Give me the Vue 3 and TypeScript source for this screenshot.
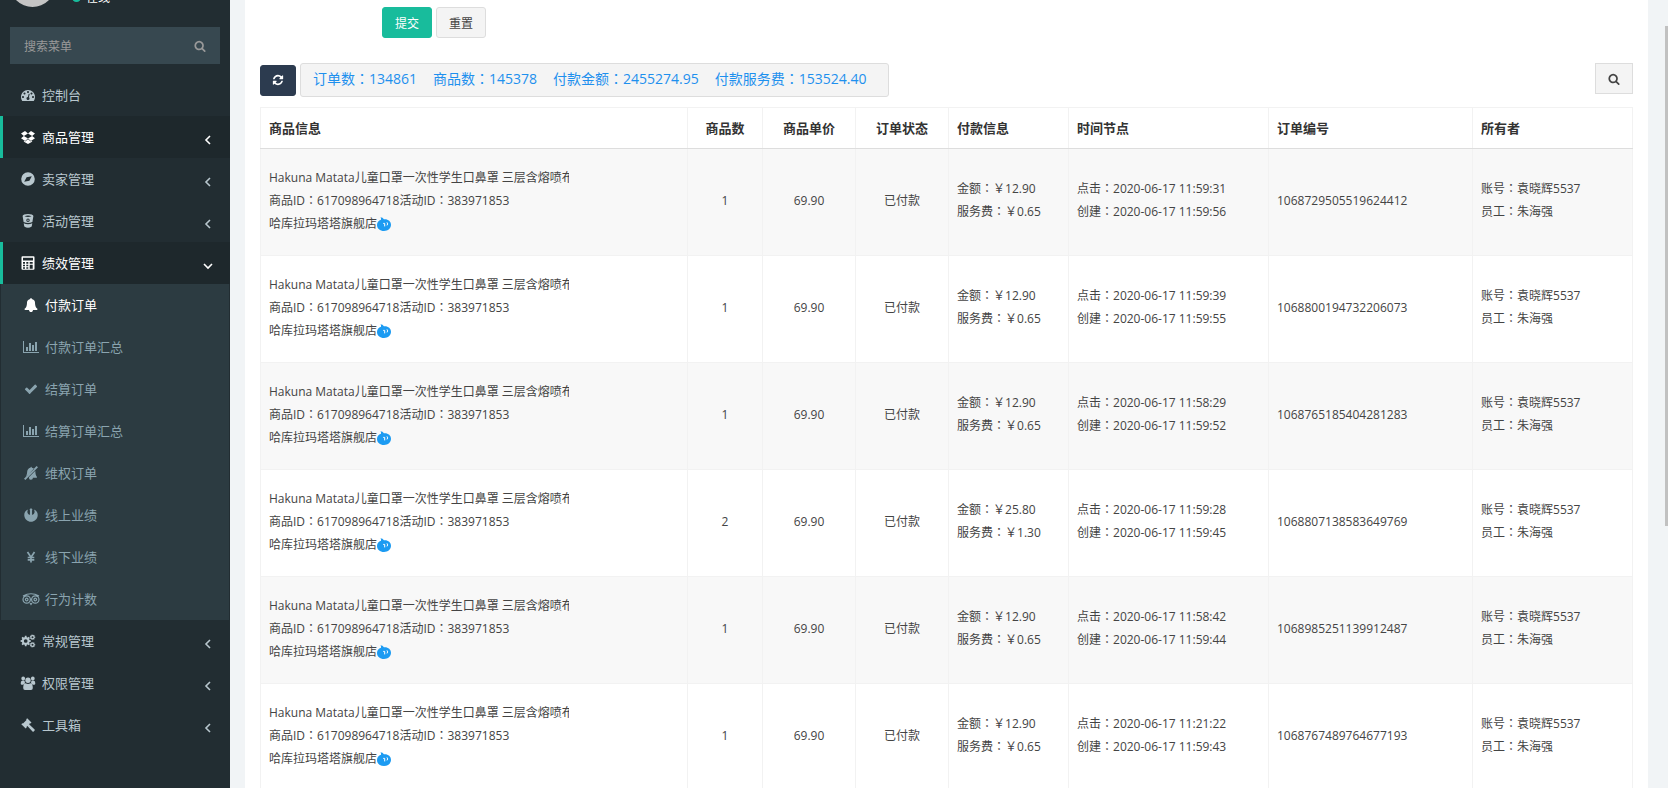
<script setup lang="ts">
import { ref } from 'vue'

interface Icon {
  box: string
  d: string
  line?: number
}

interface MenuItem {
  label: string
  icon: string
  active?: boolean
  arrow?: 'left' | 'down'
  children?: MenuItem[]
}

interface Order {
  count: number
  amount: string
  fee: string
  clicked: string
  created: string
  no: string
}

function circle(cx: number, cy: number, r: number): string {
  return `M${cx - r} ${cy}a${r} ${r} 0 1 0 ${2 * r} 0a${r} ${r} 0 1 0 ${-2 * r} 0z`
}

function gear(cx: number, cy: number, r: number, teeth: number): string {
  const points: string[] = []
  for (let i = 0; i < teeth; i++) {
    const step = (Math.PI * 2) / teeth
    const spots: [number, number][] = [[-0.32, 0.76], [-0.2, 1], [0.2, 1], [0.32, 0.76]]
    for (const [offset, scale] of spots) {
      const a = (i + offset) * step
      points.push(`${(cx + Math.cos(a) * r * scale).toFixed(2)} ${(cy + Math.sin(a) * r * scale).toFixed(2)}`)
    }
  }
  return `M${points.join('L')}z${circle(cx, cy, r * 0.36)}`
}

const icons: Record<string, Icon> = {
  dashboard: {
    box: '0 0 1792 1792',
    d: 'M384 1152q0-53-37.5-90.5T256 1024t-90.5 37.5T128 1152t37.5 90.5T256 1280t90.5-37.5T384 1152zm192-448q0-53-37.5-90.5T448 576t-90.5 37.5T320 704t37.5 90.5T448 832t90.5-37.5T576 704zm428 481l101-382q6-26-7.5-48.5T1059 725t-48 6.5-30 39.5l-101 382q-60 5-107 43.5t-63 98.5q-20 77 20 146t117 89 146-20 89-117q16-60-6-117t-72-91zm660-33q0-53-37.5-90.5T1536 1024t-90.5 37.5-37.5 90.5 37.5 90.5 90.5 37.5 90.5-37.5 37.5-90.5zm-640-640q0-53-37.5-90.5T896 384t-90.5 37.5T768 512t37.5 90.5T896 640t90.5-37.5T1024 512zm448 192q0-53-37.5-90.5T1344 576t-90.5 37.5T1216 704t37.5 90.5T1344 832t90.5-37.5T1472 704zm320 448q0 261-141 483-19 29-54 29H195q-35 0-54-29Q0 1414 0 1152q0-182 71-348t191-286 286-191 348-71 348 71 286 191 191 286 71 348z'
  },
  search: {
    box: '0 0 1792 1792',
    d: 'M1216 832q0-185-131.5-316.5T768 384 451.5 515.5 320 832t131.5 316.5T768 1280t316.5-131.5T1216 832zm512 832q0 52-38 90t-90 38q-54 0-90-38l-343-342q-179 124-399 124-143 0-273.5-55.5t-225-150-150-225T64 832t55.5-273.5 150-225 225-150T768 128t273.5 55.5 225 150 150 225T1472 832q0 220-124 399l343 343q37 37 37 90z'
  },
  refresh: {
    box: '0 0 1792 1792',
    d: 'M1639 1056q0 5-1 7-64 268-268 434.5T892 1664q-146 0-282.5-55T366 1452l-129 129q-19 19-45 19t-45-19-19-45v-448q0-26 19-45t45-19h448q26 0 45 19t19 45-19 45l-137 137q71 66 161 102t187 36q134 0 250-65t186-179q11-17 53-117 8-23 30-23h192q13 0 22.5 9.5t9.5 22.5zm25-800v448q0 26-19 45t-45 19h-448q-26 0-45-19t-19-45 19-45l138-138Q1097 384 896 384q-134 0-250 65T460 628q-11 17-53 117-8 23-30 23H178q-13 0-22.5-9.5T146 736v-7q65-268 270-434.5T896 128q146 0 284 55.5T1425 340l130-129q19-19 45-19t45 19 19 45z'
  },
  bell: {
    box: '0 0 1792 1792',
    d: 'M1728 1408q0 52-38 90t-90 38h-448q0 106-75 181t-181 75-181-75-75-181H192q-52 0-90-38t-38-90q50-42 91-88t85-119.5 74.5-158.5 50-206T384 576q0-152 117-282.5T808 135q-8-19-8-39 0-40 28-68t68-28 68 28 28 68q0 20-8 39 190 28 307 158.5T1408 576q0 139 19.5 260t50 206 74.5 158.5 85 119.5 91 88z'
  },
  chart: {
    box: '0 0 2048 1792',
    d: 'M640 896v512H384V896h256zm384-512v1024H768V384h256zm1024 1152v128H0V128h128v1408h1920zm-640-896v768h-256V640h256zm384-384v1152h-256V256h256z'
  },
  check: {
    box: '0 0 1792 1792',
    d: 'M1671 566q0 40-28 68l-724 724-136 136q-28 28-68 28t-68-28l-136-136-362-362q-28-28-28-68t28-68l136-136q28-28 68-28t68 28l294 295 656-657q28-28 68-28t68 28l136 136q28 28 28 68z'
  },
  boxes: {
    box: '0 0 14 14',
    d: 'M4 1L7 3.4 2.9 5.9 0 3.6zM10 1l4 2.6-2.9 2.3L7 3.4zM0 8.2l2.9-2.3L7 8.4l-2.9 2.5zM14 8.2l-2.9-2.3L7 8.4l2.9 2.5zM2.9 10.7l1.2.8L7 9.2l2.9 2.3 1.2-.8v1L7 14l-4.1-2.3z'
  },
  compass: {
    box: '0 0 14 14',
    d: circle(7, 7, 6.8) + 'M3.2 9.8L5.6 5.3 10.8 4.2 8.4 8.7z'
  },
  bucket: {
    box: '0 0 14 14',
    d: 'M1.6 2C1.6.8 4 0 7 0s5.4.8 5.4 2l-1 6q-4.4 2.2-8.800 0zM3.4 2.2q3.600 1.500 7.200 0q-3.600-1.500-7.200 0z' + circle(7, 6.2, 1.7) + circle(7, 6.2, 0.8) + 'M2.7 9.300q4.300 2.100 8.600 0l-.6 3.200Q7 15.200 3.300 12.500z'
  },
  calculator: {
    box: '0 0 14 14',
    d: 'M1.5.2h11q1 0 1 1v11.6q0 1-1 1h-11q-1 0-1-1V1.2q0-1 1-1zM2 1.7v2.800h10V1.7zM2 6v1.700h2V6zM5.3 6v1.700h2V6zM8.7 6v1.700h3V6zM2 8.8v1.400h2V8.8zM5.3 8.8v1.400h2V8.8zM2 11.3v1.400h2v-1.400zM5.3 11.3v1.400h2v-1.400zM8.7 8.8v3.900h3V8.8z'
  },
  mute: {
    box: '0 0 14 14',
    d: 'M12.6 0L14 1.2 1.4 14 0 12.8zM1.6 10.7C3 9.2 3 7 3.3 4.8 3.7 3 5 2 6.5 1.7Q6.6.8 7.2.8t.6.9Q9.5 2 10.3 3zM11.3 4.7C11.4 7.8 11.8 9.4 13 10.9q0 .9-.9.9H9Q8.8 13.7 7 13.7q-1.7 0-2-1.5l-.1-.9z'
  },
  rebel: {
    box: '0 0 14 14',
    d: 'M7 0l1.9 2.2-.9-.1.1 4.700C10 6.300 11.600 4.300 9.900 1.400 12.800 2.600 14 5 13.7 7.700 13.200 11.300 10.400 13.700 7 13.700S.8 11.300.3 7.700C0 5 1.200 2.600 4.100 1.400 2.400 4.300 4 6.300 5.900 6.800L6 2.100l-.9.1z'
  },
  yen: {
    box: '0 0 14 14',
    d: 'M3.5 2L7 7.3 10.5 2M7 7v5.5M3.7 7.5h6.6M3.7 9.8h6.6',
    line: 1.7
  },
  owl: {
    box: '0 0 18 14',
    d: 'M1 4Q9-.5 17 4M8 11l1 1.5 1-1.5' + circle(4.7, 7.5, 3.7) + circle(13.3, 7.5, 3.7) + circle(4.7, 7.5, 1.3) + circle(13.3, 7.5, 1.3),
    line: 1.2
  },
  gears: {
    box: '0 0 15 14',
    d: gear(5.2, 7, 5.2, 8) + gear(12, 3.2, 2.8, 7) + gear(12, 10.8, 2.8, 7)
  },
  group: {
    box: '0 0 15 14',
    d: circle(2.7, 2.5, 1.9) + circle(12.3, 2.5, 1.9) + circle(7.5, 4.2, 2.7) + 'M.2 7.5Q.2 4.8 1.5 4.8h2.6q0 1.8 1 2.9-2 0-2.5 1H1.4Q.2 8.7.2 7.5zM14.8 7.5q0-2.7-1.3-2.7h-2.6q0 1.8-1 2.9 2 0 2.5 1h1.2q1.2 0 1.2-1.2zM5 7.3q2.5 1.5 5 0 2.3 0 2.3 4.7 0 1.9-1.8 1.9h-6Q2.7 13.9 2.7 12 2.7 7.3 5 7.3z'
  },
  gavel: {
    box: '0 0 14 14',
    d: 'M6.2.3L10.5 4.6 9.5 5.6 8.9 5.3 8.1 6.2l5.5 5.2q.5.6 0 1.2l-.9.9q-.6.5-1.2 0L6.4 8 5.4 8.9l.3.6-1 1L.3 6.2l1-1 .7.3L5.5 2 5.2 1.3z'
  },
  left: { box: '0 0 14 14', d: 'M9 3L5 7l4 4', line: 1.6 },
  down: { box: '0 0 14 14', d: 'M3 5l4 4 4-4', line: 1.6 }
}

const menu: MenuItem[] = [
  { label: '控制台', icon: 'dashboard' },
  { label: '商品管理', icon: 'boxes', arrow: 'left', active: true },
  { label: '卖家管理', icon: 'compass', arrow: 'left' },
  { label: '活动管理', icon: 'bucket', arrow: 'left' },
  {
    label: '绩效管理',
    icon: 'calculator',
    arrow: 'down',
    active: true,
    children: [
      { label: '付款订单', icon: 'bell', active: true },
      { label: '付款订单汇总', icon: 'chart' },
      { label: '结算订单', icon: 'check' },
      { label: '结算订单汇总', icon: 'chart' },
      { label: '维权订单', icon: 'mute' },
      { label: '线上业绩', icon: 'rebel' },
      { label: '线下业绩', icon: 'yen' },
      { label: '行为计数', icon: 'owl' }
    ]
  },
  { label: '常规管理', icon: 'gears', arrow: 'left' },
  { label: '权限管理', icon: 'group', arrow: 'left' },
  { label: '工具箱', icon: 'gavel', arrow: 'left' }
]

const totals = [
  { label: '订单数', value: '134861' },
  { label: '商品数', value: '145378' },
  { label: '付款金额', value: '2455274.95' },
  { label: '付款服务费', value: '153524.40' }
]

const orders: Order[] = [
  { count: 1, amount: '12.90', fee: '0.65', clicked: '11:59:31', created: '11:59:56', no: '1068729505519624412' },
  { count: 1, amount: '12.90', fee: '0.65', clicked: '11:59:39', created: '11:59:55', no: '1068800194732206073' },
  { count: 1, amount: '12.90', fee: '0.65', clicked: '11:58:29', created: '11:59:52', no: '1068765185404281283' },
  { count: 2, amount: '25.80', fee: '1.30', clicked: '11:59:28', created: '11:59:45', no: '1068807138583649769' },
  { count: 1, amount: '12.90', fee: '0.65', clicked: '11:58:42', created: '11:59:44', no: '1068985251139912487' },
  { count: 1, amount: '12.90', fee: '0.65', clicked: '11:21:22', created: '11:59:43', no: '1068767489764677193' }
]

const keyword = ref('')
</script>

<template>
  <div class="app">
    <aside class="sidebar">
      <div class="user">
        <span class="avatar"></span>
        <span class="status"><i class="dot"></i>在线</span>
      </div>
      <form class="menu-search" @submit.prevent>
        <input v-model="keyword" type="text" placeholder="搜索菜单" aria-label="搜索菜单" />
        <button type="submit" aria-label="搜索">
          <svg class="icon small" :viewBox="icons.search.box"><path :d="icons.search.d" /></svg>
        </button>
      </form>
      <nav>
        <ul class="menu">
          <li v-for="item in menu" :key="item.label">
            <a href="#" class="item" :class="{ active: item.active }">
              <svg class="icon" :viewBox="icons[item.icon].box"><path :d="icons[item.icon].d" /></svg>
              <span class="label">{{ item.label }}</span>
              <svg v-if="item.arrow" class="icon arrow line" :viewBox="icons[item.arrow].box" :stroke-width="icons[item.arrow].line">
                <path :d="icons[item.arrow].d" />
              </svg>
            </a>
            <ul v-if="item.children" class="submenu">
              <li v-for="child in item.children" :key="child.label">
                <a href="#" class="subitem" :class="{ active: child.active }">
                  <svg class="icon" :class="{ line: icons[child.icon].line }" :viewBox="icons[child.icon].box" :stroke-width="icons[child.icon].line">
                    <path :d="icons[child.icon].d" />
                  </svg>
                  <span class="label">{{ child.label }}</span>
                </a>
              </li>
            </ul>
          </li>
        </ul>
      </nav>
    </aside>

    <main class="content">
      <section class="panel">
        <div class="form-actions">
          <button type="submit" class="btn primary">提交</button>
          <button type="reset" class="btn">重置</button>
        </div>

        <div class="toolbar">
          <button type="button" class="btn dark" aria-label="刷新">
            <svg class="icon small" :viewBox="icons.refresh.box"><path :d="icons.refresh.d" /></svg>
          </button>
          <div class="totals">
            <span v-for="t in totals" :key="t.label">{{ t.label }}<span class="colon">：</span>{{ t.value }}</span>
          </div>
          <button type="button" class="btn find" aria-label="搜索">
            <svg class="icon small" :viewBox="icons.search.box"><path :d="icons.search.d" /></svg>
          </button>
        </div>

        <table class="orders">
          <colgroup>
            <col />
            <col class="w-count" />
            <col class="w-price" />
            <col class="w-price" />
            <col class="w-pay" />
            <col class="w-time" />
            <col class="w-no" />
            <col class="w-owner" />
          </colgroup>
          <thead>
            <tr>
              <th>商品信息</th>
              <th class="center">商品数</th>
              <th class="center">商品单价</th>
              <th class="center">订单状态</th>
              <th>付款信息</th>
              <th>时间节点</th>
              <th>订单编号</th>
              <th>所有者</th>
            </tr>
          </thead>
          <tbody>
            <tr v-for="o in orders" :key="o.no">
              <td>
                <div class="name">Hakuna Matata儿童口罩一次性学生口鼻罩 三层含熔喷布</div>
                <div>商品ID<span class="colon">：</span>617098964718活动ID<span class="colon">：</span>383971853</div>
                <div class="shop">
                  哈库拉玛塔塔旗舰店
                  <svg class="chat" viewBox="0 0 14 14">
                    <path class="drop" d="M3.5.3Q5.800.3 6.900 2.200C11 1.800 14 4.200 14 7.800S11 14 7 14 0 11.500 0 8C0 5.500 1.500 3.600 4 2.800Q4.300 1.500 3.500.3z" />
                    <path class="eyes" d="M6.2 6.400h1.500v3M10 5.400q1.300 1.500 0 3" />
                  </svg>
                </div>
              </td>
              <td class="center">{{ o.count }}</td>
              <td class="center">69.90</td>
              <td class="center">已付款</td>
              <td>
                <div>金额<span class="colon">：</span>￥{{ o.amount }}</div>
                <div>服务费<span class="colon">：</span>￥{{ o.fee }}</div>
              </td>
              <td>
                <div>点击<span class="colon">：</span>2020-06-17 {{ o.clicked }}</div>
                <div>创建<span class="colon">：</span>2020-06-17 {{ o.created }}</div>
              </td>
              <td>{{ o.no }}</td>
              <td>
                <div>账号<span class="colon">：</span>袁晓辉5537</div>
                <div>员工<span class="colon">：</span>朱海强</div>
              </td>
            </tr>
          </tbody>
        </table>
      </section>
      <div class="scroll-thumb"></div>
    </main>
  </div>
</template>

<style>
body {
  margin: 0;
}
</style>

<style scoped>
.app {
  display: flex;
  height: 100vh;
  overflow: hidden;
  background: #f1f4f6;
  color: #444;
  font-family: "Open Sans", "Noto Sans CJK SC", sans-serif;
  font-size: 12px;
}

.app *,
.app {
  box-sizing: border-box;
}

button,
input {
  font: inherit;
  margin: 0;
}

ul {
  margin: 0;
  padding: 0;
  list-style: none;
}

.icon {
  height: 14px;
  flex: none;
  fill: currentColor;
  fill-rule: evenodd;
}

.icon.small {
  width: 12px;
  height: 12px;
}

.icon.line {
  fill: none;
  stroke: currentColor;
}

.colon {
  font-family: "Noto Sans CJK TC", sans-serif;
  line-height: 1;
}

.sidebar {
  flex: none;
  width: 230px;
  background: #222d32;
}

.user {
  display: flex;
  align-items: flex-end;
  gap: 17px;
  height: 27px;
  padding: 0 10px 20px;
  overflow: hidden;
}

.avatar {
  flex: none;
  width: 45px;
  height: 45px;
  border-radius: 50%;
  background: #c4c4c4;
}

.status {
  display: flex;
  align-items: center;
  gap: 5px;
  padding-bottom: 1px;
  line-height: 16px;
  color: #fff;
}

.dot {
  width: 9px;
  height: 9px;
  margin-bottom: 2px;
  border-radius: 50%;
  background: #18bc9c;
}

.menu-search {
  display: flex;
  height: 37px;
  margin: 0 10px 10px;
  background: #374850;
}

.menu-search input {
  flex: 1;
  min-width: 0;
  padding: 2px 14px 0;
  border: 0;
  outline: 0;
  background: transparent;
  color: #fff;
}

.menu-search input::placeholder {
  color: #999;
}

.menu-search button {
  display: flex;
  align-items: center;
  justify-content: center;
  width: 40px;
  padding: 0;
  border: 0;
  background: transparent;
  color: #999;
}

.item,
.subitem {
  display: flex;
  align-items: center;
  height: 42px;
  font-size: 13px;
  text-decoration: none;
}

.label {
  padding-bottom: 2px;
}

.item {
  gap: 6px;
  padding: 0 15px 0 17px;
  border-left: 3px solid transparent;
  color: #b8c7ce;
}

.item .icon {
  width: 16px;
}

.item.active {
  background: #1e282c;
  border-left-color: #18bc9c;
  color: #fff;
}

.item .arrow {
  width: 14px;
  margin: 5px 0 0 auto;
}

.submenu {
  margin: 0 1px;
  background: #2c3b41;
}

.subitem {
  gap: 5px;
  padding-left: 21px;
  color: #8aa4af;
}

.subitem .icon {
  width: 18px;
}

.subitem.active {
  color: #fff;
}

.content {
  position: relative;
  flex: 1;
  min-width: 0;
  padding: 0 20px 0 15px;
}

.panel {
  min-height: 100vh;
  padding: 7px 15px 0;
  background: #fff;
}

.form-actions {
  display: flex;
  gap: 4px;
  margin: 0 0 25px 122px;
}

.btn {
  display: flex;
  align-items: center;
  justify-content: center;
  height: 31px;
  padding: 0 12px;
  border: 1px solid #ddd;
  border-radius: 3px;
  background: #f4f4f4;
  color: #444;
}

.btn.primary {
  border-color: #18bc9c;
  background: #18bc9c;
  color: #fff;
}

.btn.dark {
  padding: 0 11px;
  border-color: #2c3b4f;
  background: #2c3b4f;
  color: #fff;
}

.toolbar {
  display: flex;
  align-items: center;
  gap: 4px;
  margin-bottom: 10px;
}

.totals {
  display: flex;
  gap: 16px;
  height: 34px;
  padding: 0 21px 0 12px;
  border: 1px solid #ddd;
  border-radius: 3px;
  background: #f4f4f4;
  color: #1e90ee;
  font-size: 14px;
  line-height: 30px;
  white-space: nowrap;
}

.find {
  align-self: flex-start;
  margin-left: auto;
  border-radius: 0;
}

.orders {
  width: 100%;
  border-collapse: collapse;
  table-layout: fixed;
  line-height: 23px;
}

.w-count {
  width: 75px;
}

.w-price {
  width: 93px;
}

.w-pay {
  width: 120px;
}

.w-time {
  width: 200px;
}

.w-no {
  width: 204px;
}

.w-owner {
  width: 160px;
}

th,
td {
  border: 1px solid #f2f2f2;
  text-align: left;
  white-space: nowrap;
}

th {
  height: 41px;
  padding: 0 8px;
  border-bottom-color: #ddd;
  color: #333;
  font-size: 13px;
  font-weight: 700;
}

td {
  height: 107px;
  padding: 16px 8px 20px;
}

.center {
  text-align: center;
}

tbody tr:nth-child(odd) {
  background: #f8f8f8;
}

.name {
  width: 300px;
  overflow: hidden;
}

.shop {
  display: flex;
  align-items: center;
}

.chat {
  width: 14px;
  height: 14px;
  margin-top: 2px;
}

.drop {
  fill: #1c9bf2;
}

.eyes {
  fill: none;
  stroke: #fff;
}

.scroll-thumb {
  position: absolute;
  top: 26px;
  right: 0;
  width: 3px;
  height: 500px;
  background: #c1c1c1;
}
</style>
